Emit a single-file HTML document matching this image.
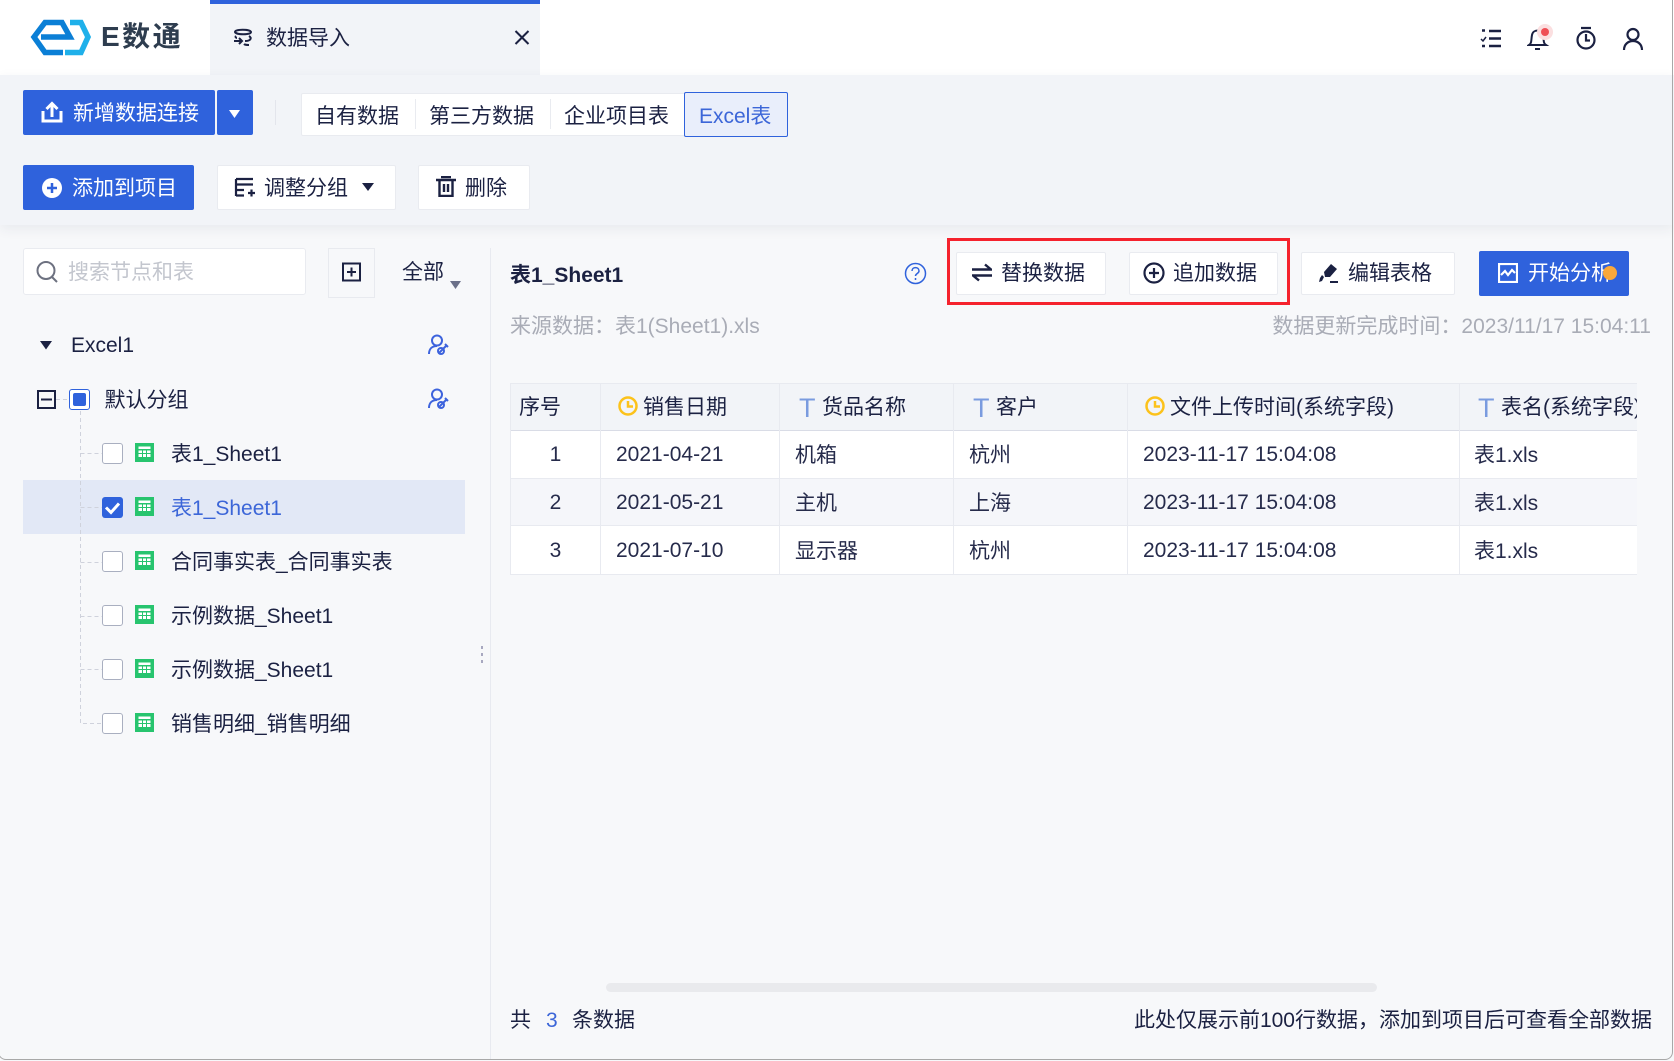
<!DOCTYPE html>
<html lang="zh"><head><meta charset="utf-8"><title>数据导入</title>
<style>
html,body{margin:0;padding:0;width:1674px;height:1061px;overflow:hidden;background:#f7f8fa}
body{position:relative;font-family:"Liberation Sans","Noto Sans CJK SC",sans-serif;font-size:21px;color:#1b2142}
.a,.t,svg{position:absolute}
.t{white-space:nowrap;line-height:30px;height:30px;margin-top:2px}
.m1{margin-top:1px}
.btn{position:absolute;box-sizing:border-box;background:#fff;border:1px solid #e9ebf0;border-radius:2px}
.pri{position:absolute;background:#2f62dc;border-radius:2px}
.w{color:#fff}
.g{color:#a9acb6}
.cb{position:absolute;box-sizing:border-box;left:102px;width:21px;height:21px;border:1px solid #a9afc0;border-radius:3px;background:#fff}
.ln{position:absolute;background:#e8eaf0}
.tc{color:#262b4b}
</style></head><body>
<!-- header -->
<div class="a" style="left:0;top:0;width:1674px;height:75px;background:#fff"></div>
<svg style="left:28px;top:17px" width="64" height="40" viewBox="28 17 64 40"><path d="M70 22.500H81L88 37 81 52.500H65" fill="none" stroke="#1fb0ea" stroke-width="5.500"/><path d="M63 52.500H45L34 37 45 22.500H62L70 37H41" fill="none" stroke="#0b7fd6" stroke-width="5.500"/></svg>
<div class="t" style="left:101px;top:20px;font-size:28px;font-weight:700;color:#2e3d4f;letter-spacing:2.500px">E数通</div>
<div class="a" style="left:210px;top:0;width:330px;height:75px;background:#f2f4f8;border-top:4px solid #2f62dc;box-sizing:border-box"></div>
<svg style="left:232px;top:27px" width="22" height="20" viewBox="0 0 22 20" fill="none" stroke="#1b2142" stroke-width="2"><path d="M3 5c0-3 15-3 16 0 0 3-15 3-16 0zM17 9c3 2 2 5-4 5M2 14h8M7 11l3 3-3 3M4 9c-1 1 0 2 1 2M17 18c-2 0-4 0-5-1"/></svg>
<div class="t" style="left:266px;top:22px">数据导入</div>
<svg style="left:514px;top:30px" width="16" height="15" viewBox="0 0 16 15" stroke="#1b2142" stroke-width="2"><path d="M1.500 1l13 13M14.500 1l-13 13"/></svg>
<svg style="left:1480px;top:27px" width="22" height="22" viewBox="0 0 22 22" fill="none" stroke="#1b2142" stroke-width="2.500"><path d="M9 4h12M9 11.500h12M9 19h12M2 3.500h3M2 19h3"/><path d="M1 12l2 2 3-4" stroke-width="1.500"/></svg>
<svg style="left:1527px;top:25px" width="24" height="26" viewBox="0 0 24 26" fill="none" stroke="#1b2142" stroke-width="2"><path d="M2 20c3-2 2-5 3-10 1-6 10-6 11 0 1 5 0 8 3 10zM8 24h5"/></svg>
<div class="a" style="left:1537px;top:24px;width:16px;height:16px;border-radius:50%;background:#fbdfe0"></div>
<div class="a" style="left:1541px;top:28px;width:8px;height:8px;border-radius:50%;background:#ef4e55"></div>
<svg style="left:1575px;top:26px" width="22" height="25" viewBox="0 0 22 25" fill="none" stroke="#1b2142" stroke-width="2.200"><circle cx="11" cy="14" r="8.500"/><path d="M6 2h10M11 8v6.500h4" /></svg>
<svg style="left:1622px;top:27px" width="22" height="24" viewBox="0 0 22 24" fill="none" stroke="#1b2142" stroke-width="2.200"><circle cx="11" cy="7.500" r="5.500"/><path d="M2 23c0-12 18-12 18 0"/></svg>
<!-- toolbar -->
<div class="a" style="left:0;top:75px;width:1674px;height:150px;background:#f2f4f8;box-shadow:0 4px 12px rgba(40,50,80,.07)"></div>
<div class="pri" style="left:23px;top:90px;width:192px;height:45px"></div>
<div class="pri" style="left:217px;top:90px;width:36px;height:45px"></div>
<svg style="left:41px;top:101px" width="22" height="22" viewBox="0 0 22 22" fill="none" stroke="#fff" stroke-width="3"><path d="M2 10v10h18V10M11 16V3M5.500 8L11 2.500 16.500 8"/></svg>
<div class="t w" style="left:73px;top:97px">新增数据连接</div>
<svg style="left:228px;top:110px" width="14" height="9" viewBox="0 0 14 9"><path d="M1 0h11L6.500 8z" fill="#fff"/></svg>
<div class="a" style="left:275px;top:100px;width:1px;height:25px;background:#e3e5ec"></div>
<div class="btn" style="left:301px;top:93px;width:384px;height:43px;border-radius:2px 0 0 2px"></div>
<div class="a" style="left:415px;top:99px;width:1px;height:30px;background:#e9ebf0"></div>
<div class="a" style="left:550px;top:99px;width:1px;height:30px;background:#e9ebf0"></div>
<div class="t" style="left:315px;top:100px">自有数据</div>
<div class="t" style="left:429px;top:100px">第三方数据</div>
<div class="t" style="left:564px;top:100px">企业项目表</div>
<div class="a" style="left:684px;top:92px;width:104px;height:45px;box-sizing:border-box;background:#e9eefb;border:1px solid #2f62dc;border-radius:2px"></div>
<div class="t" style="left:699px;top:100px;color:#3c66d8">Excel表</div>
<div class="pri" style="left:23px;top:165px;width:171px;height:45px"></div>
<svg style="left:41px;top:177px" width="22" height="22" viewBox="0 0 22 22"><circle cx="11" cy="11" r="10" fill="#fff"/><path d="M6 11h10M11 6v10" stroke="#2f62dc" stroke-width="2.500"/></svg>
<div class="t w" style="left:72px;top:172px">添加到项目</div>
<div class="btn" style="left:217px;top:165px;width:179px;height:45px"></div>
<svg style="left:234px;top:177px" width="21" height="20" viewBox="0 0 21 20" fill="none" stroke="#1b2142" stroke-width="2.200"><path d="M2 2h17M2 7.500h17M2 13h8M2 18.500h8M2 2v17M14 16h7M17.500 12.500v7"/></svg>
<div class="t" style="left:264px;top:172px">调整分组</div>
<svg style="left:362px;top:183px" width="12" height="8" viewBox="0 0 12 8"><path d="M0 0h12L6 8z" fill="#1b2142"/></svg>
<div class="btn" style="left:418px;top:165px;width:112px;height:45px"></div>
<svg style="left:436px;top:176px" width="20" height="21" viewBox="0 0 20 21" fill="none" stroke="#1b2142" stroke-width="2.400"><path d="M0 4h20M5 1h10M3.500 4v16h13V4M8 8v8M12 8v8"/></svg>
<div class="t" style="left:465px;top:172px">删除</div>
<!-- left panel -->
<div class="btn" style="left:23px;top:248px;width:283px;height:47px;border-radius:3px"></div>
<svg style="left:36px;top:260px" width="23" height="24" viewBox="0 0 23 24" fill="none" stroke="#6d7180" stroke-width="2"><circle cx="10" cy="10.500" r="8.500"/><path d="M16 17l5 5"/></svg>
<div class="t" style="left:68px;top:256px;color:#c3c6ce">搜索节点和表</div>
<div class="a" style="left:328px;top:248px;width:47px;height:50px;box-sizing:border-box;border:1px solid #e8eaef"></div>
<svg style="left:342px;top:262px" width="19" height="20" viewBox="0 0 19 20" fill="none" stroke="#1b2142" stroke-width="2"><rect x="1" y="1.500" width="17" height="17"/><path d="M5 10h9M9.500 5.500v9"/></svg>
<div class="t" style="left:402px;top:256px">全部</div>
<svg style="left:450px;top:281px" width="12" height="8" viewBox="0 0 12 8"><path d="M0 0h11L5.500 8z" fill="#6b7089"/></svg>
<div class="a" style="left:490px;top:248px;width:1px;height:811px;background:#e8eaf0"></div>
<svg style="left:40px;top:341px" width="13" height="9" viewBox="0 0 13 9"><path d="M0 0h12L6 8.500z" fill="#1b2142"/></svg>
<div class="t" style="left:71px;top:329px">Excel1</div>
<svg style="left:428px;top:334px" width="22" height="21" viewBox="0 0 22 21" fill="none" stroke="#3d63dd" stroke-width="2"><circle cx="9" cy="6.500" r="5"/><path d="M1 20c0-5 3-8 8-8M11 19l7-7M17 10l3 3"/><circle cx="13" cy="17" r="3"/></svg>
<svg style="left:428px;top:388px" width="22" height="21" viewBox="0 0 22 21" fill="none" stroke="#3d63dd" stroke-width="2"><circle cx="9" cy="6.500" r="5"/><path d="M1 20c0-5 3-8 8-8M11 19l7-7M17 10l3 3"/><circle cx="13" cy="17" r="3"/></svg>
<!-- tree lines -->
<div class="a" style="left:23px;top:480px;width:442px;height:54px;background:#e2e8f6"></div>
<svg style="left:56px;top:398px" width="50" height="330" viewBox="0 0 50 330" fill="none" stroke="#cfd2dc" stroke-dasharray="4 3"><path d="M0 1.500h13M24.500 13V325.500H46M24.500 55.500H46M24.500 109.500H46M24.500 164.500H46M24.500 218.500H46M24.500 271.500H46"/></svg>
<svg style="left:37px;top:390px" width="19" height="19" viewBox="0 0 19 19" fill="none" stroke="#1b2142" stroke-width="2"><rect x="1" y="1" width="17" height="17"/><path d="M4 9.500h11"/></svg>
<div class="a" style="left:69px;top:389px;width:21px;height:21px;box-sizing:border-box;border:1px solid #2f62dc;border-radius:3px;background:#fff"></div>
<div class="a" style="left:73px;top:393px;width:13px;height:13px;border-radius:2px;background:#2f62dc"></div>
<div class="t" style="left:104.500px;top:384px">默认分组</div>
<div class="cb" style="top:443px"></div>
<div class="a" style="left:102px;top:497px;width:21px;height:21px;border-radius:3px;background:#2f62dc"></div>
<svg style="left:102px;top:497px" width="21" height="21" viewBox="0 0 21 21" fill="none" stroke="#fff" stroke-width="3"><path d="M4 10.500l5 5 8-9"/></svg>
<div class="cb" style="top:551px"></div><div class="cb" style="top:605px"></div><div class="cb" style="top:659px"></div><div class="cb" style="top:713px"></div>
<svg style="left:135px;top:443px" width="19" height="19" viewBox="0 0 19 19"><use href="#tb"/></svg>
<svg style="left:135px;top:497px" width="19" height="19" viewBox="0 0 19 19"><use href="#tb"/></svg>
<svg style="left:135px;top:551px" width="19" height="19" viewBox="0 0 19 19"><use href="#tb"/></svg>
<svg style="left:135px;top:605px" width="19" height="19" viewBox="0 0 19 19"><use href="#tb"/></svg>
<svg style="left:135px;top:659px" width="19" height="19" viewBox="0 0 19 19"><use href="#tb"/></svg>
<svg style="left:135px;top:713px" width="19" height="19" viewBox="0 0 19 19"><use href="#tb"/></svg>
<svg width="0" height="0"><defs><g id="tb"><rect width="19" height="19" fill="#27c46e"/><path d="M3.500 3.500h12v2.500h-12zM3.500 7.500h3.500v2.500H3.500zM8 7.500h3v2.500H8zM12 7.500h3.500v2.500H12zM3.500 11h3.500v3H3.500zM8 11h3v3H8zM12 11h3.500v3H12z" fill="#fff"/></g></defs></svg>
<div class="t" style="left:171px;top:438px">表1_Sheet1</div>
<div class="t" style="left:171px;top:492px;color:#3c66d8">表1_Sheet1</div>
<div class="t" style="left:171px;top:546px">合同事实表_合同事实表</div>
<div class="t" style="left:171px;top:600px">示例数据_Sheet1</div>
<div class="t" style="left:171px;top:654px">示例数据_Sheet1</div>
<div class="t" style="left:171px;top:708px">销售明细_销售明细</div>
<div class="a" style="left:481px;top:646px;width:2px;height:3px;background:#a8a8c0"></div>
<div class="a" style="left:481px;top:653px;width:2px;height:3px;background:#a8a8c0"></div>
<div class="a" style="left:481px;top:660px;width:2px;height:3px;background:#a8a8c0"></div>
<!-- right head -->
<div class="t m1" style="left:510px;top:260px;font-weight:700">表1_Sheet1</div>
<svg style="left:904px;top:262px" width="23" height="23" viewBox="0 0 23 23" fill="none" stroke="#2f62dc" stroke-width="1.500"><circle cx="11.500" cy="11.500" r="10"/><path d="M8 9c0-4.500 7-4.500 7 0 0 2.500-3.500 2.500-3.500 5" /><path d="M11.500 16v2"/></svg>
<div class="a" style="left:947px;top:238px;width:343px;height:67px;box-sizing:border-box;border:3px solid #f5222d"></div>
<div class="btn" style="left:956px;top:252px;width:150px;height:43px"></div>
<svg style="left:972px;top:263px" width="20" height="19" viewBox="0 0 20 19" fill="none" stroke="#1b2142" stroke-width="2.400"><path d="M0 6.500h19L13 1.500M20 12.500H1L7 17.500"/></svg>
<div class="t m1" style="left:1001px;top:258px">替换数据</div>
<div class="btn" style="left:1129px;top:252px;width:149px;height:43px"></div>
<svg style="left:1143px;top:262px" width="22" height="22" viewBox="0 0 22 22" fill="none" stroke="#1b2142" stroke-width="2.200"><circle cx="11" cy="11" r="9.500"/><path d="M6 11h10M11 6v10"/></svg>
<div class="t m1" style="left:1173px;top:258px">追加数据</div>
<div class="btn" style="left:1301px;top:252px;width:154px;height:43px"></div>
<svg style="left:1319px;top:263px" width="20" height="21" viewBox="0 0 20 21"><path d="M5 9L12 1l6 5-7 8H6zM0 19l3-1 2-4-2-2-2 3zM11 18h8v2h-8z" fill="#1b2142"/></svg>
<div class="t m1" style="left:1348px;top:258px">编辑表格</div>
<div class="pri" style="left:1479px;top:251px;width:150px;height:45px"></div>
<svg style="left:1498px;top:263px" width="20" height="20" viewBox="0 0 20 20" fill="none" stroke="#fff" stroke-width="2.200"><rect x="1" y="1" width="18" height="18"/><path d="M3 12l4-4 3 4 4-5 3 3"/></svg>
<div class="t w m1" style="left:1528px;top:258px">开始分析</div>
<div class="a" style="left:1603px;top:266px;width:14px;height:14px;border-radius:50%;background:#f9a83a"></div>
<div class="t g m1" style="left:510px;top:311px">来源数据：表1(Sheet1).xls</div>
<div class="t g m1" style="right:23px;top:311px">数据更新完成时间：2023/11/17 15:04:11</div>
<!-- table -->
<div class="a" style="left:510px;top:383px;width:1127px;height:192px;overflow:hidden;background:#fff;box-sizing:border-box;border:1px solid #e8eaf0;border-right:0">
 <div class="a" style="left:-1px;top:-1px;width:1127px;height:47px;background:#f2f4f8;border-bottom:1px solid #d9dce6;box-sizing:content-box"></div>
 <div class="a" style="left:-1px;top:94px;width:1127px;height:48px;background:#f5f6fa;border-top:1px solid #e8eaf0;border-bottom:1px solid #e8eaf0;box-sizing:border-box"></div>
 <div class="ln" style="left:89px;top:0;width:1px;height:192px"></div>
 <div class="ln" style="left:268px;top:0;width:1px;height:192px"></div>
 <div class="ln" style="left:442px;top:0;width:1px;height:192px"></div>
 <div class="ln" style="left:616px;top:0;width:1px;height:192px"></div>
 <div class="ln" style="left:948px;top:0;width:1px;height:192px"></div>
 <div class="t m1" style="left:8px;top:8px">序号</div>
 <svg style="left:107px;top:12px" width="20" height="20" viewBox="0 0 20 20" fill="none" stroke="#fcc21b" stroke-width="2.500"><circle cx="10" cy="10" r="8.500"/><path d="M10 5v5.500h5"/></svg>
 <div class="t m1" style="left:132px;top:8px">销售日期</div>
 <div class="t m1" style="left:288px;top:8px;font-size:27px;color:#7a9bdf">T</div>
 <div class="t m1" style="left:311px;top:8px">货品名称</div>
 <div class="t m1" style="left:462px;top:8px;font-size:27px;color:#7a9bdf">T</div>
 <div class="t m1" style="left:485px;top:8px">客户</div>
 <svg style="left:634px;top:12px" width="20" height="20" viewBox="0 0 20 20" fill="none" stroke="#fcc21b" stroke-width="2.500"><circle cx="10" cy="10" r="8.500"/><path d="M10 5v5.500h5"/></svg>
 <div class="t m1" style="left:659px;top:8px">文件上传时间(系统字段)</div>
 <div class="t m1" style="left:967px;top:8px;font-size:27px;color:#7a9bdf">T</div>
 <div class="t m1" style="left:990px;top:8px">表名(系统字段)</div>

 <div class="t tc" style="left:0;width:89px;text-align:center;top:54px">1</div>
 <div class="t tc" style="left:105px;top:54px">2021-04-21</div>
 <div class="t tc" style="left:284px;top:55px">机箱</div>
 <div class="t tc" style="left:458px;top:55px">杭州</div>
 <div class="t tc" style="left:632px;top:54px">2023-11-17 15:04:08</div>
 <div class="t tc" style="left:963px;top:55px">表1.xls</div>

 <div class="t tc" style="left:0;width:89px;text-align:center;top:102px">2</div>
 <div class="t tc" style="left:105px;top:102px">2021-05-21</div>
 <div class="t tc" style="left:284px;top:103px">主机</div>
 <div class="t tc" style="left:458px;top:103px">上海</div>
 <div class="t tc" style="left:632px;top:102px">2023-11-17 15:04:08</div>
 <div class="t tc" style="left:963px;top:103px">表1.xls</div>

 <div class="t tc" style="left:0;width:89px;text-align:center;top:150px">3</div>
 <div class="t tc" style="left:105px;top:150px">2021-07-10</div>
 <div class="t tc" style="left:284px;top:151px">显示器</div>
 <div class="t tc" style="left:458px;top:151px">杭州</div>
 <div class="t tc" style="left:632px;top:150px">2023-11-17 15:04:08</div>
 <div class="t tc" style="left:963px;top:151px">表1.xls</div>
</div>
<!-- footer -->
<div class="a" style="left:606px;top:983px;width:771px;height:9px;border-radius:5px;background:#e9eaed"></div>
<div class="t m1" style="left:510px;top:1005px">共</div>
<div class="t m1" style="left:546px;top:1005px;color:#3c66d8">3</div>
<div class="t m1" style="left:572px;top:1005px">条数据</div>
<div class="t m1" style="right:22px;top:1005px">此处仅展示前100行数据，添加到项目后可查看全部数据</div>
<!-- window edge -->
<div class="a" style="left:-2px;top:-10px;width:1675px;height:1070px;box-sizing:border-box;border:1px solid #a8a8a8;border-radius:0 0 8px 8px;pointer-events:none"></div>
</body></html>
